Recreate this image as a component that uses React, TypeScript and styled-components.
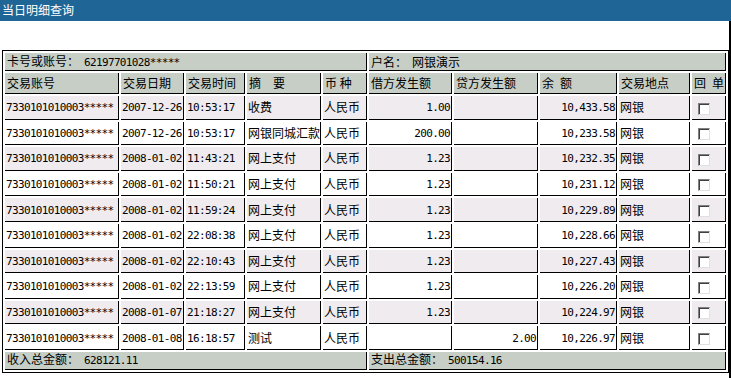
import React from 'react'
import styled, { createGlobalStyle } from 'styled-components'

interface Txn {
  account: string
  date: string
  time: string
  memo: string
  currency: string
  debit: string
  credit: string
  balance: string
  place: string
}

const GlobalStyle = createGlobalStyle`
  html, body {
    margin: 0;
    padding: 0;
    background: #fff;
  }
  body {
    font-family: "Noto Sans CJK SC", "DejaVu Sans", sans-serif;
    font-size: 12px;
    color: #000;
  }
`

const Page = styled.div`
  width: 731px;
  height: 378px;
  overflow: hidden;
`

const TitleBar = styled.div`
  height: 21px;
  background: #1f6596;
  color: #fff;
  font-size: 12px;
  line-height: 20px;
  padding-left: 2px;
`

const Body = styled.div`
  height: 357px;
  border-right: 2px solid #000;
  padding-top: 29px;
  padding-left: 2px;
  box-sizing: border-box;
`

const Grid = styled.table`
  width: 727px;
  table-layout: fixed;
  border-collapse: separate;
  border-spacing: 2px;
  border: 1px solid #000;
  font-size: 12px;
  line-height: 14px;
`

const BaseCell = styled.td<{ $align?: 'left' | 'right' | 'center' }>`
  box-sizing: border-box;
  padding: 0 1px;
  border-right: 1px solid #000;
  border-bottom: 1px solid #000;
  text-align: ${({ $align }) => $align || 'left'};
  white-space: nowrap;
  overflow: hidden;
  vertical-align: middle;
`

const InfoCell = styled(BaseCell)`
  height: 18px;
  background: #c6cec6;
  padding-left: 2px;
`

const HeadCell = styled(BaseCell).attrs({ as: 'th' })`
  height: 21px;
  background: #c6cec6;
  font-weight: normal;
  padding-left: 2px;
`

const DataRow = styled.tr<{ $alt: boolean }>`
  height: 23.6px;
  background: ${({ $alt }) => ($alt ? '#efebef' : '#fff')};
`

const Num = styled.span`
  font-family: "DejaVu Sans Mono", "Liberation Mono", monospace;
  font-size: 11px;
  letter-spacing: -0.65px;
`

const Gap = styled.span`
  display: inline-block;
  width: 5px;
`

const CheckBox = styled.span`
  display: inline-block;
  width: 12px;
  height: 12px;
  box-sizing: border-box;
  margin-left: 5px;
  vertical-align: middle;
  background: #fff;
  border-top: 1px solid #808080;
  border-left: 1px solid #808080;
  border-right: 1px solid #e0e0e0;
  border-bottom: 1px solid #e0e0e0;
  box-shadow: inset 1px 1px 0 #404040;
`

const columns = [114, 63, 59, 74, 44, 83, 84, 77, 71, 34]

const rows: Txn[] = [
  { account: '7330101010003*****', date: '2007-12-26', time: '10:53:17', memo: '收费', currency: '人民币', debit: '1.00', credit: '', balance: '10,433.58', place: '网银' },
  { account: '7330101010003*****', date: '2007-12-26', time: '10:53:17', memo: '网银同城汇款', currency: '人民币', debit: '200.00', credit: '', balance: '10,233.58', place: '网银' },
  { account: '7330101010003*****', date: '2008-01-02', time: '11:43:21', memo: '网上支付', currency: '人民币', debit: '1.23', credit: '', balance: '10,232.35', place: '网银' },
  { account: '7330101010003*****', date: '2008-01-02', time: '11:50:21', memo: '网上支付', currency: '人民币', debit: '1.23', credit: '', balance: '10,231.12', place: '网银' },
  { account: '7330101010003*****', date: '2008-01-02', time: '11:59:24', memo: '网上支付', currency: '人民币', debit: '1.23', credit: '', balance: '10,229.89', place: '网银' },
  { account: '7330101010003*****', date: '2008-01-02', time: '22:08:38', memo: '网上支付', currency: '人民币', debit: '1.23', credit: '', balance: '10,228.66', place: '网银' },
  { account: '7330101010003*****', date: '2008-01-02', time: '22:10:43', memo: '网上支付', currency: '人民币', debit: '1.23', credit: '', balance: '10,227.43', place: '网银' },
  { account: '7330101010003*****', date: '2008-01-02', time: '22:13:59', memo: '网上支付', currency: '人民币', debit: '1.23', credit: '', balance: '10,226.20', place: '网银' },
  { account: '7330101010003*****', date: '2008-01-07', time: '21:18:27', memo: '网上支付', currency: '人民币', debit: '1.23', credit: '', balance: '10,224.97', place: '网银' },
  { account: '7330101010003*****', date: '2008-01-08', time: '16:18:57', memo: '测试', currency: '人民币', debit: '', credit: '2.00', balance: '10,226.97', place: '网银' },
]

const headers = ['交易账号', '交易日期', '交易时间', '摘\u3000要', '币 种', '借方发生额', '贷方发生额', '余\u2002额', '交易地点', '回\u2002单']

export default function App() {
  return (
    <Page>
      <GlobalStyle />
      <TitleBar>当日明细查询</TitleBar>
      <Body>
        <Grid>
          <colgroup>
            {columns.map((w, i) => (
              <col key={i} style={{ width: w }} />
            ))}
          </colgroup>
          <tbody>
            <tr>
              <InfoCell colSpan={5}>
                卡号或账号：<Gap />
                <Num>62197701028*****</Num>
              </InfoCell>
              <InfoCell colSpan={5}>
                户名：<Gap />网银演示
              </InfoCell>
            </tr>
            <tr>
              {headers.map((h) => (
                <HeadCell key={h}>{h}</HeadCell>
              ))}
            </tr>
            {rows.map((r, i) => (
              <DataRow key={i} $alt={i % 2 === 0}>
                <BaseCell><Num>{r.account}</Num></BaseCell>
                <BaseCell><Num>{r.date}</Num></BaseCell>
                <BaseCell><Num>{r.time}</Num></BaseCell>
                <BaseCell>{r.memo}</BaseCell>
                <BaseCell>{r.currency}</BaseCell>
                <BaseCell $align='right'><Num>{r.debit}</Num></BaseCell>
                <BaseCell $align='right'><Num>{r.credit}</Num></BaseCell>
                <BaseCell $align='right'><Num>{r.balance}</Num></BaseCell>
                <BaseCell>{r.place}</BaseCell>
                <BaseCell><CheckBox /></BaseCell>
              </DataRow>
            ))}
            <tr>
              <InfoCell colSpan={5}>
                收入总金额：<Gap />
                <Num>628121.11</Num>
              </InfoCell>
              <InfoCell colSpan={5}>
                支出总金额：<Gap />
                <Num>500154.16</Num>
              </InfoCell>
            </tr>
          </tbody>
        </Grid>
      </Body>
    </Page>
  )
}
